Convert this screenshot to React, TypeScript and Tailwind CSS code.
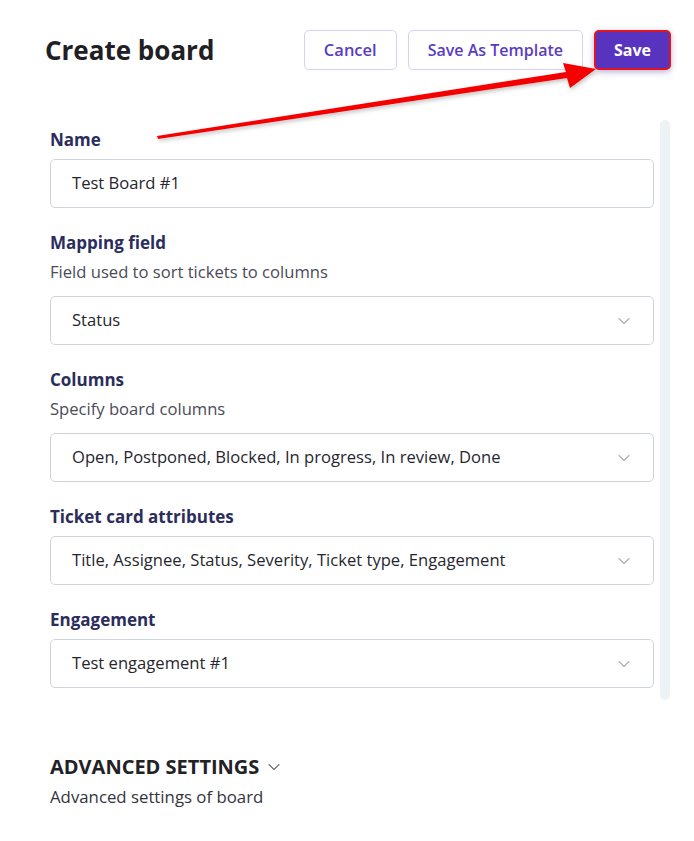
import React from 'react';
import { ChevronDown } from 'lucide-react';

const font = { fontFamily: '"Open Sans", "Noto Sans", sans-serif' };

function Field({
  label,
  hint,
  value,
  select,
}: {
  label: string;
  hint?: string;
  value: string;
  select?: boolean;
}) {
  return (
    <div className="flex flex-col">
      <div className="text-[17px] leading-6 font-bold text-[#2b2d5c]">{label}</div>
      {hint && <div className="mt-[5px] text-[16.6px] leading-6 text-[#4a4b57]">{hint}</div>}
      <div
        className={`${hint ? 'mt-[12px]' : 'mt-[7px]'} flex h-[49px] items-center justify-between rounded-[5px] border border-[#cfd4dc] bg-white pl-[21px] pr-[19px]`}
      >
        <span className="text-[16.6px] text-[#26262e]">{value}</span>
        {select && <ChevronDown className="size-[20px] text-[#a9adb5]" strokeWidth={1.3} />}
      </div>
    </div>
  );
}

export default function App() {
  return (
    <div className="relative min-h-[841px] w-[694px] bg-white" style={font}>
      {/* header */}
      <div className="flex items-center justify-between pl-[45px] pr-[23px] pt-[30px]">
        <h1 className="text-[26px] font-bold leading-10 text-[#202024]">Create board</h1>
        <div className="flex items-center gap-[11px]">
          <button className="h-10 rounded-[5px] border border-[#d8cff5] bg-white px-[19px] text-[16.5px] font-semibold text-[#5a3cc4]">
            Cancel
          </button>
          <button className="h-10 rounded-[5px] border border-[#d8cff5] bg-white px-[19px] text-[16px] font-semibold text-[#5a3cc4]">
            Save As Template
          </button>
          <button className="h-10 rounded-[5px] border-2 border-[#e0141e] bg-[#5733c0] px-[18px] text-[16px] font-bold text-white shadow-[0_2px_6px_rgba(60,30,140,0.35)]">
            Save
          </button>
        </div>
      </div>

      {/* form + scroll track */}
      <div className="mt-[50px] flex pl-[50px]">
        <div className="flex w-[604px] flex-col gap-[23px] pb-[12px] pt-[8px]">
          <Field label="Name" value="Test Board #1" />
          <Field
            label="Mapping field"
            hint="Field used to sort tickets to columns"
            value="Status"
            select
          />
          <Field
            label="Columns"
            hint="Specify board columns"
            value="Open, Postponed, Blocked, In progress, In review, Done"
            select
          />
          <Field
            label="Ticket card attributes"
            value="Title, Assignee, Status, Severity, Ticket type, Engagement"
            select
          />
          <Field label="Engagement" value="Test engagement #1" select />
        </div>
        <div className="ml-[6px] w-[10px] rounded-full bg-[#edf2f5]" />
      </div>

      {/* advanced */}
      <div className="mt-[53px] pl-[50px]">
        <div className="flex items-center gap-[5px]">
          <span className="text-[20px] font-bold leading-7 text-[#222226]">ADVANCED SETTINGS</span>
          <ChevronDown className="size-[20px] text-[#6b6f80]" strokeWidth={1.3} />
        </div>
        <div className="mt-[4px] text-[16.8px] leading-6 text-[#33343d]">Advanced settings of board</div>
      </div>

      {/* annotation arrow */}
      <svg
        className="pointer-events-none absolute left-0 top-0"
        width="694"
        height="841"
        viewBox="0 0 694 841"
      >
        <defs>
          <filter id="sh" x="-10%" y="-50%" width="120%" height="200%">
            <feDropShadow dx="1" dy="2" stdDeviation="2" floodColor="#000" floodOpacity="0.25" />
          </filter>
        </defs>
        <polygon
          points="158,139 567,78 570,88 596,69 563,63 566,72 157,136"
          fill="#f40000"
          filter="url(#sh)"
        />
      </svg>
    </div>
  );
}
